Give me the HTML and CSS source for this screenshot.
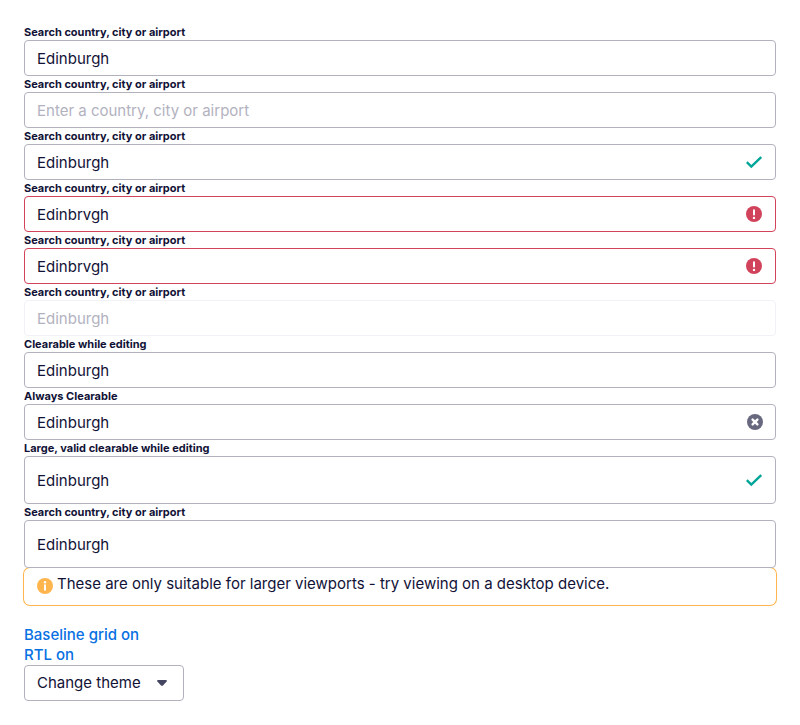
FILE: index.html
```html
<!DOCTYPE html>
<html lang="en">
<head>
<meta charset="utf-8">
<meta name="viewport" content="width=device-width, initial-scale=1">
<title>Inputs</title>
<link rel="stylesheet" href="styles.css">
</head>
<body>
<svg class="sprite" aria-hidden="true">
  <symbol id="tick" viewBox="0 0 16 16"><path d="M.8 8.2 5.300 12.600 15.200 3" fill="none" stroke="currentColor" stroke-width="2.4"/></symbol>
  <symbol id="alert" viewBox="0 0 16 16"><circle cx="8" cy="8" r="8" fill="currentColor"/><path d="M8 4.200v4.300" stroke="#fff" stroke-width="2" stroke-linecap="round"/><circle cx="8" cy="11.900" r="1.200" fill="#fff"/></symbol>
  <symbol id="cross" viewBox="0 0 16 16"><circle cx="8" cy="8" r="8" fill="currentColor"/><path d="m5.600 5.600 4.800 4.800m0-4.800-4.800 4.800" stroke="#fff" stroke-width="2.400" stroke-linecap="round"/></symbol>
  <symbol id="info" viewBox="0 0 16 16"><circle cx="8" cy="8" r="8" fill="currentColor"/><circle cx="8" cy="4.200" r="1.200" fill="#fff"/><path d="M8 7.300v4.500" stroke="#fff" stroke-width="2" stroke-linecap="round"/></symbol>
</svg>
<main class="page">
  <form class="form">
    <label class="label" for="f1">Search country, city or airport</label>
    <div class="field"><input class="input" id="f1" type="text" value="Edinburgh"></div>
    <label class="label" for="f2">Search country, city or airport</label>
    <div class="field"><input class="input" id="f2" type="text" placeholder="Enter a country, city or airport"></div>
    <label class="label" for="f3">Search country, city or airport</label>
    <div class="field"><input class="input" id="f3" type="text" value="Edinburgh"><svg class="icon status valid"><use href="#tick"/></svg></div>
    <label class="label" for="f4">Search country, city or airport</label>
    <div class="field"><input class="input input-invalid" id="f4" type="text" value="Edinbrvgh" spellcheck="false" aria-invalid="true"><svg class="icon status invalid"><use href="#alert"/></svg></div>
    <label class="label" for="f5">Search country, city or airport</label>
    <div class="field"><input class="input input-invalid" id="f5" type="text" value="Edinbrvgh" spellcheck="false" aria-invalid="true"><svg class="icon status invalid"><use href="#alert"/></svg></div>
    <label class="label" for="f6">Search country, city or airport</label>
    <div class="field"><input class="input" id="f6" type="text" value="Edinburgh" disabled></div>
    <label class="label" for="f7">Clearable while editing</label>
    <div class="field"><input class="input" id="f7" type="text" value="Edinburgh"></div>
    <label class="label" for="f8">Always Clearable</label>
    <div class="field"><input class="input" id="f8" type="text" value="Edinburgh"><button class="clear" type="button" aria-label="Clear"><svg class="icon"><use href="#cross"/></svg></button></div>
    <label class="label" for="f9">Large, valid clearable while editing</label>
    <div class="field"><input class="input input-large" id="f9" type="text" value="Edinburgh"><svg class="icon status valid"><use href="#tick"/></svg></div>
    <label class="label" for="f10">Search country, city or airport</label>
    <div class="field"><input class="input input-large" id="f10" type="text" value="Edinburgh"></div>
  </form>
  <div class="banner">
    <svg class="icon banner-icon"><use href="#info"/></svg>
    <span>These are only suitable for larger viewports - try viewing on a desktop device.</span>
  </div>
  <nav class="tools">
    <a class="link" href="#grid">Baseline grid on</a>
    <a class="link" href="#rtl">RTL on</a>
    <select class="select" aria-label="Change theme"><option>Change theme</option></select>
  </nav>
</main>
</body>
</html>
```
FILE: styles.css
```css
* {
  box-sizing: border-box;
}

body {
  margin: 0;
  background: #fff;
  color: #111236;
  font: 15px/20px Inter, "Liberation Sans", sans-serif;
}

.sprite {
  position: absolute;
  width: 0;
  height: 0;
}

.page {
  padding: 24px;
}

.label {
  display: block;
  font-size: 11px;
  font-weight: 700;
  line-height: 16px;
}

.field {
  position: relative;
  z-index: 1;
}

.input,
.select {
  display: block;
  height: 36px;
  margin: 0;
  padding: 0 12px;
  border: 1px solid #b2b2bf;
  border-radius: 4px;
  background-color: #fff;
  color: inherit;
  font: inherit;
}

.input {
  width: 100%;
}

.input::placeholder {
  color: #b2b2bf;
  opacity: 1;
}

.input:disabled {
  border-color: #f1f2f8;
  color: #b2b2bf;
}

.input-invalid {
  border-color: #d1435b;
}

.input-large {
  height: 48px;
}

.icon {
  display: block;
  flex: none;
  width: 16px;
  height: 16px;
}

.status {
  position: absolute;
  top: 0;
  right: 14px;
  bottom: 0;
  margin: auto 0;
}

.valid {
  color: #00a698;
}

.invalid {
  color: #d1435b;
}

.clear {
  position: absolute;
  top: 0;
  right: 13px;
  height: 100%;
  padding: 0;
  border: 0;
  background: none;
  color: #68697f;
}

.banner {
  display: flex;
  gap: 4px;
  padding: 6px 13px 11px;
  border-radius: 6px;
  box-shadow: 0 0 0 1px #ffb54d;
}

.banner-icon {
  margin-top: 4px;
  color: #ffb54d;
}

.tools {
  display: flex;
  flex-direction: column;
  align-items: flex-start;
  margin-top: 20px;
}

.link {
  color: #0770e3;
  font-weight: 500;
  text-decoration: none;
}

.select {
  width: 160px;
  appearance: none;
  background-image: url("data:image/svg+xml,%3Csvg xmlns='http://www.w3.org/2000/svg' width='10' height='6'%3E%3Cpath d='M1 0h8q1.400.2.600 1.400L6 5.400q-1 .8-2 0L.4 1.400Q-.4.2 1 0z' fill='%23444560'/%3E%3C/svg%3E");
  background-position: right 16px center;
  background-repeat: no-repeat;
}
```
